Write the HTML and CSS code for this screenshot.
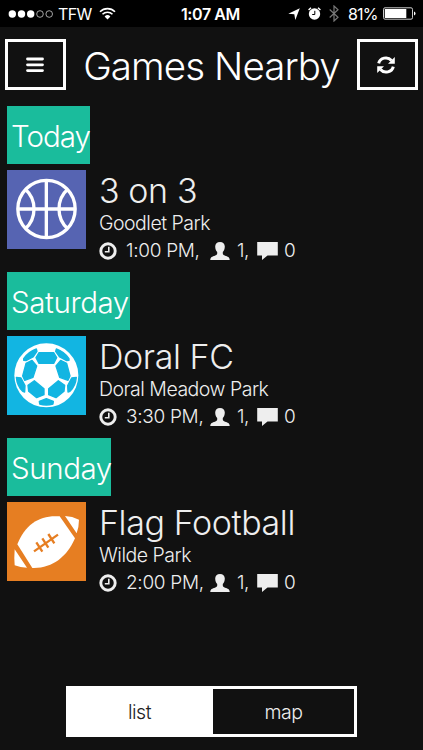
FILE: index.html
```
<!DOCTYPE html>
<html lang="en">

<head>
    <meta charset="UTF-8">
    <title>Games Nearby</title>
    <link rel="stylesheet" href="styles.css">
</head>

<body>
    <svg class="sprite" width="0" height="0">
        <symbol id="clock" viewBox="0 0 18 18">
            <circle cx="9" cy="9" r="7.2" fill="none" stroke="currentColor" stroke-width="2.9" />
            <path d="M9.8 4.8v5H5.8" fill="none" stroke="currentColor" stroke-width="1.6" />
        </symbol>
        <symbol id="person" viewBox="0 0 20 18">
            <path d="M10 0C7 0 5.2 1.8 5.2 4.6c0 2.3 .8 4.2 2 5.5v1.5c0 1-.9 1.6-2.3 2.1C2.5 14.5 .3 15 .3 18h19.4c0-3-2.2-3.500-4.600-4.300-1.400-.5-2.300-1.100-2.300-2.100v-1.500c1.200-1.300 2-3.200 2-5.500C14.800 1.800 13 0 10 0z" fill="currentColor" />
        </symbol>
        <symbol id="comment" viewBox="0 0 21 18">
            <path d="M.2 0h20.600v13.500H10.500L5 18v-4.500H.2z" fill="currentColor" />
        </symbol>
    </svg>

    <div class="statusbar">
        <svg class="signal" width="46" height="10" viewBox="0 0 46 10">
            <g fill="#fff">
                <circle cx="4.3" cy="5" r="3.7" />
                <circle cx="13.5" cy="5" r="3.7" />
                <circle cx="22.7" cy="5" r="3.7" />
            </g>
            <g fill="none" stroke="#ccc" stroke-width=".8">
                <circle cx="32" cy="5" r="3.3" />
                <circle cx="41.2" cy="5" r="3.3" />
            </g>
        </svg>
        <span class="carrier">TFW</span>
        <svg class="wifi" width="17" height="13" viewBox="0 0 17 13">
            <path d="M1 4.7a10.6 10.6 0 0 1 15 0M3.5 7.3a7 7 0 0 1 10 0" fill="none" stroke="#fff" stroke-width="1.6" />
            <path d="M5.6 9.4a4.1 4.1 0 0 1 5.800 0L8.500 12.500z" fill="#fff" />
        </svg>
        <span class="time">1:07 AM</span>
        <div class="status-right">
            <svg width="12" height="12" viewBox="0 0 12 12">
                <path d="M11.8 .3L7.3 12 6.3 6.300 .3 5.700z" fill="#fff" />
            </svg>
            <svg class="alarm" width="13" height="13" viewBox="0 0 13 13">
                <circle cx="6.5" cy="7" r="5.7" fill="#fff" />
                <path d="M.6 3L3 .8M12.4 3L10 .8" stroke="#fff" stroke-width="1.500" />
                <path d="M6.8 3.800v3.700H4.200" fill="none" stroke="#000" stroke-width="1" />
            </svg>
            <svg class="bluetooth" width="10" height="17" viewBox="0 0 10 17">
                <path d="M.7 4.5l8.3 7.7-4 3.8V1l4 3.8L.7 12.5" fill="none" stroke="#777" stroke-width="1.2" />
            </svg>
            <span class="percent">81%</span>
            <svg class="battery" width="33" height="13" viewBox="0 0 33 13">
                <rect x=".5" y=".8" width="29" height="11.4" rx="1.5" fill="none" stroke="#ccc" />
                <rect x="1.8" y="2" width="21.5" height="9" fill="#fff" />
                <path d="M31 4.5q1.5 .4 1.5 2t-1.5 2z" fill="#fff" />
            </svg>
        </div>
    </div>

    <div class="header">
        <button class="btn">
            <svg class="bars" width="18" height="16" viewBox="0 0 18 16">
                <path d="M1.5 2h15M1.5 7.8h15M1.5 13.6h15" stroke="#fff" stroke-width="2.8" stroke-linecap="round" />
            </svg>
        </button>
        <h1>Games Nearby</h1>
        <button class="btn">
            <svg class="refresh" width="18" height="18" viewBox="0 0 18 18">
                <path d="M1.7 7.4A7.3 6.9 0 0 1 14.5 4.5M16.3 10.6A7.3 6.9 0 0 1 3.5 13.5" fill="none" stroke="#fff" stroke-width="3" />
                <path d="M17.8 1v6.7H11zM.2 17v-6.7H7z" fill="#fff" />
            </svg>
        </button>
    </div>

    <div class="games">
        <div class="day today">Today</div>
        <div class="game">
            <div class="tile basketball">
                <svg viewBox="0 0 237 237">
                    <g fill="none" stroke="#fff" stroke-width="10">
                        <circle cx="118.5" cy="117" r="86" />
                        <path d="M118 31v172M32 117h172" />
                        <path d="M55 58q26 23 26 59t-26 59M182 58q-26 23-26 59t26 59" />
                    </g>
                </svg>
            </div>
            <div class="info">
                <h2>3 on 3</h2>
                <p>Goodlet Park</p>
                <div class="meta">
                    <svg class="clock"><use href="#clock" /></svg>
                    <span class="when">1:00 PM,</span>
                    <svg class="person"><use href="#person" /></svg>
                    <span class="players">1,</span>
                    <svg class="comment"><use href="#comment" /></svg>
                    <span>0</span>
                </div>
            </div>
        </div>

        <div class="day saturday">Saturday</div>
        <div class="game">
            <div class="tile soccer">
                <svg viewBox="0 0 237 237">
                    <circle cx="118" cy="118" r="96" fill="#fff" />
                    <g fill="#12b5e2" stroke="#12b5e2" stroke-width="4" stroke-linejoin="round">
                        <path d="M96 50h44l9 15-9 17H96l-9-17z" />
                        <path d="M50 68q15-21 38-29l2 7-12 17-21 11-7-1z" />
                        <path d="M186 68q-15-21-38-29l-2 7 12 17 21 11 7-1z" />
                        <path d="M57 82l18-9 14 17-11 34-25 9-6-13z" />
                        <path d="M179 82l-18-9-14 17 11 34 25 9 6-13z" />
                        <path d="M63 148l19-14 29 24v18l-22 9-24-19z" />
                        <path d="M173 148l-19-14-29 24v18l22 9 24-19z" />
                        <path d="M28 124l14 2 12 23-1 19-6-2q-17-17-19-42z" />
                        <path d="M208 124l-14 2-12 23 1 19 6-2q17-17 19-42z" />
                        <path d="M97 196l21-8 21 8-1 8q-20 6-40 0z" />
                    </g>
                </svg>
            </div>
            <div class="info">
                <h2>Doral FC</h2>
                <p>Doral Meadow Park</p>
                <div class="meta">
                    <svg class="clock"><use href="#clock" /></svg>
                    <span class="when">3:30 PM,</span>
                    <svg class="person"><use href="#person" /></svg>
                    <span class="players">1,</span>
                    <svg class="comment"><use href="#comment" /></svg>
                    <span>0</span>
                </div>
            </div>
        </div>

        <div class="day sunday">Sunday</div>
        <div class="game">
            <div class="tile football">
                <svg viewBox="0 0 237 237">
                    <path d="M31 127C55 65 100 38 158 43L204 109C180 165 135 200 76 198z" fill="#fff" />
                    <path d="M174 42q22 1 42 11 0 20-7 41zM23 142L60 197q-20 0-37-7-2-22 0-48z" fill="#fff" />
                    <path d="M81 148l72-50M88 121l18 28M106 109l18 28M124 96l18 28" stroke="#e67e22" stroke-width="7" />
                </svg>
            </div>
            <div class="info">
                <h2>Flag Football</h2>
                <p>Wilde Park</p>
                <div class="meta">
                    <svg class="clock"><use href="#clock" /></svg>
                    <span class="when">2:00 PM,</span>
                    <svg class="person"><use href="#person" /></svg>
                    <span class="players">1,</span>
                    <svg class="comment"><use href="#comment" /></svg>
                    <span>0</span>
                </div>
            </div>
        </div>
    </div>

    <div class="tabs">
        <button class="tab active">list</button>
        <button class="tab">map</button>
    </div>
</body>

</html>
```
FILE: styles.css
```
* {
    box-sizing: border-box;
}

body {
    display: flex;
    flex-direction: column;
    width: 423px;
    height: 750px;
    margin: 0;
    overflow: hidden;
    background-color: #111;
    color: #eee;
    font-family: Inter, "Liberation Sans", sans-serif;
    font-weight: 300;
}

h1,
h2,
p {
    margin: 0;
    font-weight: 300;
    white-space: nowrap;
}

svg {
    display: block;
    flex: none;
}

.sprite {
    display: none;
}

.statusbar {
    display: flex;
    align-items: center;
    flex: none;
    height: 27px;
    padding: 0 7px 0 8px;
    background-color: #000;
    color: #fff;
    font-size: 16px;
}

.carrier {
    width: 33px;
    margin-left: 4px;
    font-weight: 400;
    letter-spacing: -0.6px;
}

.wifi {
    margin-left: 8px;
}

.time {
    margin-left: 65px;
    font-weight: 600;
    letter-spacing: -0.4px;
}

.status-right {
    display: flex;
    align-items: center;
    margin-left: auto;
}

.alarm,
.bluetooth {
    margin-left: 8px;
}

.percent {
    width: 30px;
    margin-left: 9px;
    font-weight: 400;
    letter-spacing: -0.8px;
}

.battery {
    margin-left: 5px;
}

.header {
    display: flex;
    justify-content: space-between;
    flex: none;
    height: 79px;
    padding: 12px 5px 0;
}

.header h1 {
    color: #fff;
    font-size: 38.5px;
    line-height: 54px;
    letter-spacing: -0.9px;
}

.btn {
    display: flex;
    align-items: center;
    justify-content: center;
    width: 61px;
    height: 51px;
    padding: 0;
    border: 3px solid #fff;
    background-color: #111;
}

.bars {
    margin-right: 2px;
}

.refresh {
    margin-right: 3px;
}

.games {
    padding-left: 7px;
}

.day {
    width: 83px;
    height: 58px;
    padding-left: 4px;
    background-color: #1abc9c;
    color: #fff;
    font-size: 29.5px;
    line-height: 60px;
    letter-spacing: -0.4px;
    white-space: nowrap;
}

.today {
    letter-spacing: -1px;
}

.saturday {
    width: 123px;
}

.sunday {
    width: 104px;
}

.game {
    display: flex;
    gap: 13px;
    height: 108px;
    padding-top: 6px;
}

.tile {
    width: 79px;
    height: 79px;
}

.basketball {
    background-color: #5664b2;
}

.soccer {
    background-color: #12b5e2;
}

.football {
    background-color: #e67e22;
}

.info h2 {
    font-size: 34px;
    line-height: 42px;
    letter-spacing: -0.4px;
}

.info p {
    font-size: 19.5px;
    line-height: 23px;
    letter-spacing: -0.5px;
}

.meta {
    display: flex;
    align-items: center;
    height: 31px;
    font-size: 19px;
    white-space: nowrap;
}

.clock {
    width: 18px;
    height: 18px;
}

.when {
    width: 77px;
    margin-left: 9px;
    letter-spacing: -0.3px;
}

.person {
    width: 20px;
    height: 18px;
    margin-left: 7px;
}

.players {
    width: 13px;
    margin-left: 7px;
    letter-spacing: -0.5px;
}

.comment {
    width: 21px;
    height: 18px;
    margin: 0 6px 0 7px;
}

.tabs {
    display: flex;
    flex: none;
    width: 291px;
    height: 51px;
    margin: auto 0 13px 66px;
    border: 3px solid #fff;
}

.tab {
    flex: 1;
    padding: 0;
    border: none;
    background-color: #111;
    color: #eee;
    font: inherit;
    font-size: 19.5px;
    letter-spacing: -0.5px;
}

.active {
    padding-right: 3px;
    background-color: #fff;
    color: #222;
}
```
